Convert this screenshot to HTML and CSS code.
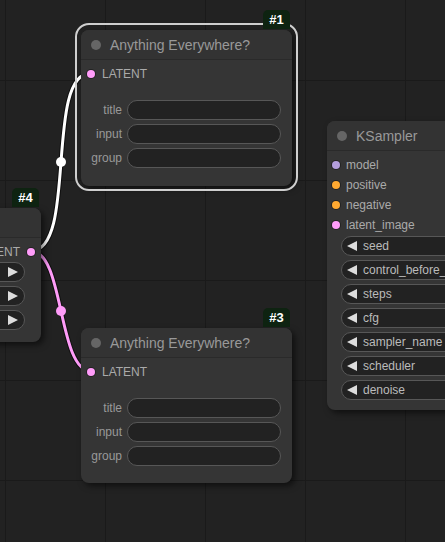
FILE: index.html
```html
<!DOCTYPE html>
<html lang="en">
  <head>
    <title>Graph</title>
    <link rel="stylesheet" href="styles.css">
  </head>
  <body>
    <div class="graph">
      <!-- links are drawn under the nodes -->
      <svg class="links" width="445" height="542" viewBox="0 0 445 542">
        <path class="link-shadow" d="M31 251 C78 251 44 73 91 73" />
        <path class="link-white" d="M31 251 C78 251 44 73 91 73" />
        <circle cx="61" cy="162" r="5" fill="#fff" />
        <path class="link-shadow" d="M31 251 C64.5 251 57.5 371 91 371" />
        <path class="link-pink" d="M31 251 C64.5 251 57.5 371 91 371" />
        <circle cx="61" cy="311" r="5" fill="#ff9cf9" />
      </svg>

      <div class="node node-4">
        <span class="badge">#4</span>
        <div class="title"></div>
        <div class="slots">
          <div class="slot slot-out"><span>LATENT</span><i class="dot latent"></i></div>
        </div>
        <div class="widgets widgets-4">
          <div class="widget widget-next"><i class="arrow-right"></i></div>
          <div class="widget widget-next"><i class="arrow-right"></i></div>
          <div class="widget widget-next"><i class="arrow-right"></i></div>
        </div>
      </div>

      <div class="node node-1 selected">
        <span class="badge">#1</span>
        <div class="title"><i class="title-dot"></i>Anything Everywhere?</div>
        <div class="slots">
          <div class="slot"><i class="dot latent"></i><span>LATENT</span></div>
        </div>
        <div class="widgets widgets-ae">
          <div class="text-row"><label>title</label><div class="text-box"></div></div>
          <div class="text-row"><label>input</label><div class="text-box"></div></div>
          <div class="text-row"><label>group</label><div class="text-box"></div></div>
        </div>
      </div>

      <div class="node node-3">
        <span class="badge">#3</span>
        <div class="title"><i class="title-dot"></i>Anything Everywhere?</div>
        <div class="slots">
          <div class="slot"><i class="dot latent"></i><span>LATENT</span></div>
        </div>
        <div class="widgets widgets-ae">
          <div class="text-row"><label>title</label><div class="text-box"></div></div>
          <div class="text-row"><label>input</label><div class="text-box"></div></div>
          <div class="text-row"><label>group</label><div class="text-box"></div></div>
        </div>
      </div>

      <div class="node node-ks">
        <div class="title"><i class="title-dot"></i>KSampler</div>
        <div class="slots slots-ks">
          <div class="slot"><i class="dot model"></i><span>model</span></div>
          <div class="slot"><i class="dot cond"></i><span>positive</span></div>
          <div class="slot"><i class="dot cond"></i><span>negative</span></div>
          <div class="slot"><i class="dot latent"></i><span>latent_image</span></div>
        </div>
        <div class="widgets widgets-ks">
          <div class="widget"><i class="arrow-left"></i><span>seed</span></div>
          <div class="widget"><i class="arrow-left"></i><span>control_before_generate</span></div>
          <div class="widget"><i class="arrow-left"></i><span>steps</span></div>
          <div class="widget"><i class="arrow-left"></i><span>cfg</span></div>
          <div class="widget"><i class="arrow-left"></i><span>sampler_name</span></div>
          <div class="widget"><i class="arrow-left"></i><span>scheduler</span></div>
          <div class="widget"><i class="arrow-left"></i><span>denoise</span></div>
        </div>
      </div>
    </div>
  </body>
</html>
```

FILE: styles.css
```css
body {
  margin: 0;
  background: #222;
  font-family: "Liberation Sans", Arial, sans-serif;
}
.graph {
  position: relative;
  width: 445px;
  height: 542px;
  overflow: hidden;
  background-color: #222;
  background-image:
    linear-gradient(to right, #1a1a1a 1px, transparent 1px),
    linear-gradient(to bottom, #1a1a1a 1px, transparent 1px);
  background-size: 100px 100px;
  background-position: 5px 80px;
}
.links {
  position: absolute;
  left: 0;
  top: 0;
}
.link-shadow {
  fill: none;
  stroke: rgba(0, 0, 0, 0.55);
  stroke-width: 5;
}
.link-white {
  fill: none;
  stroke: #fff;
  stroke-width: 3;
}
.link-pink {
  fill: none;
  stroke: #ff9cf9;
  stroke-width: 3;
}

/* nodes sit on a free canvas */
.node {
  position: absolute;
  background: #353535;
  border-radius: 8px;
  box-shadow: 3px 3px 6px rgba(0, 0, 0, 0.55);
  color: #aaa;
  font-size: 12px;
}
.node-1 {
  left: 81px;
  top: 30px;
  width: 211px;
  height: 156px;
}
.node-3 {
  left: 81px;
  top: 328px;
  width: 211px;
  height: 155px;
}
.node-4 {
  left: -160px;
  top: 208px;
  width: 201px;
  height: 134px;
}
.node-ks {
  left: 327px;
  top: 121px;
  width: 200px;
  height: 289px;
}
.selected::before {
  content: "";
  position: absolute;
  top: -7px;
  left: -6px;
  right: -6px;
  bottom: -5px;
  border: 2px solid #cfcfcf;
  border-radius: 14px;
}
.badge {
  position: absolute;
  top: -20px;
  right: 2px;
  z-index: 2;
  width: 27px;
  height: 19px;
  line-height: 19px;
  text-align: center;
  background: #0e2311;
  border-radius: 5px 5px 0 0;
  color: #fff;
  font-weight: bold;
  font-size: 13px;
}
.title {
  display: flex;
  align-items: center;
  height: 29px;
  padding-left: 10px;
  background: #333;
  border-bottom: 1px solid #2a2a2a;
  border-radius: 8px 8px 0 0;
  color: #999;
  font-size: 14px;
}
.title-dot {
  width: 10px;
  height: 10px;
  margin-right: 9px;
  border-radius: 50%;
  background: #666;
}

.slots {
  padding-top: 4px;
}
.slot {
  display: flex;
  align-items: center;
  height: 20px;
  padding-left: 6px;
}
.slot-out {
  justify-content: flex-end;
  padding-left: 0;
  padding-right: 6px;
}
.slot span {
  margin-left: 7px;
}
.slot-out span {
  margin-left: 0;
  margin-right: 7px;
}
.dot {
  width: 8px;
  height: 8px;
  border-radius: 50%;
  box-shadow: 0 0 0 1px rgba(0, 0, 0, 0.35);
}
.dot.latent {
  background: #ff9cf9;
}
.dot.model {
  background: #b39ddb;
}
.dot.cond {
  background: #ffa931;
}
.slots-ks .slot {
  padding-left: 5px;
}
.slots-ks .slot span {
  margin-left: 6px;
}

.widgets {
  display: flex;
  flex-direction: column;
  gap: 4px;
}
.widgets-ae {
  margin-top: 16px;
  padding-right: 11px;
}
.widgets-4 {
  margin-top: 0;
  padding-right: 16px;
  padding-left: 14px;
}
.widgets-ks {
  margin-top: 1px;
  padding-left: 14px;
}
.text-row {
  display: flex;
  align-items: center;
  gap: 5px;
}
.text-row label {
  width: 41px;
  text-align: right;
  color: #999;
}
.text-box,
.widget {
  height: 18px;
  border: 1px solid #575757;
  border-radius: 10px;
  background: #222;
}
.text-box {
  flex: 1;
}
.widget {
  display: flex;
  align-items: center;
  white-space: nowrap;
  overflow: hidden;
  color: #bbb;
}
.widget-next {
  justify-content: flex-end;
  padding-right: 6px;
}
.arrow-left {
  flex: none;
  width: 0;
  height: 0;
  margin: 0 6px 0 5px;
  border-top: 5px solid transparent;
  border-bottom: 5px solid transparent;
  border-right: 10px solid #ddd;
}
.arrow-right {
  width: 0;
  height: 0;
  border-top: 5px solid transparent;
  border-bottom: 5px solid transparent;
  border-left: 10px solid #ddd;
}
```
